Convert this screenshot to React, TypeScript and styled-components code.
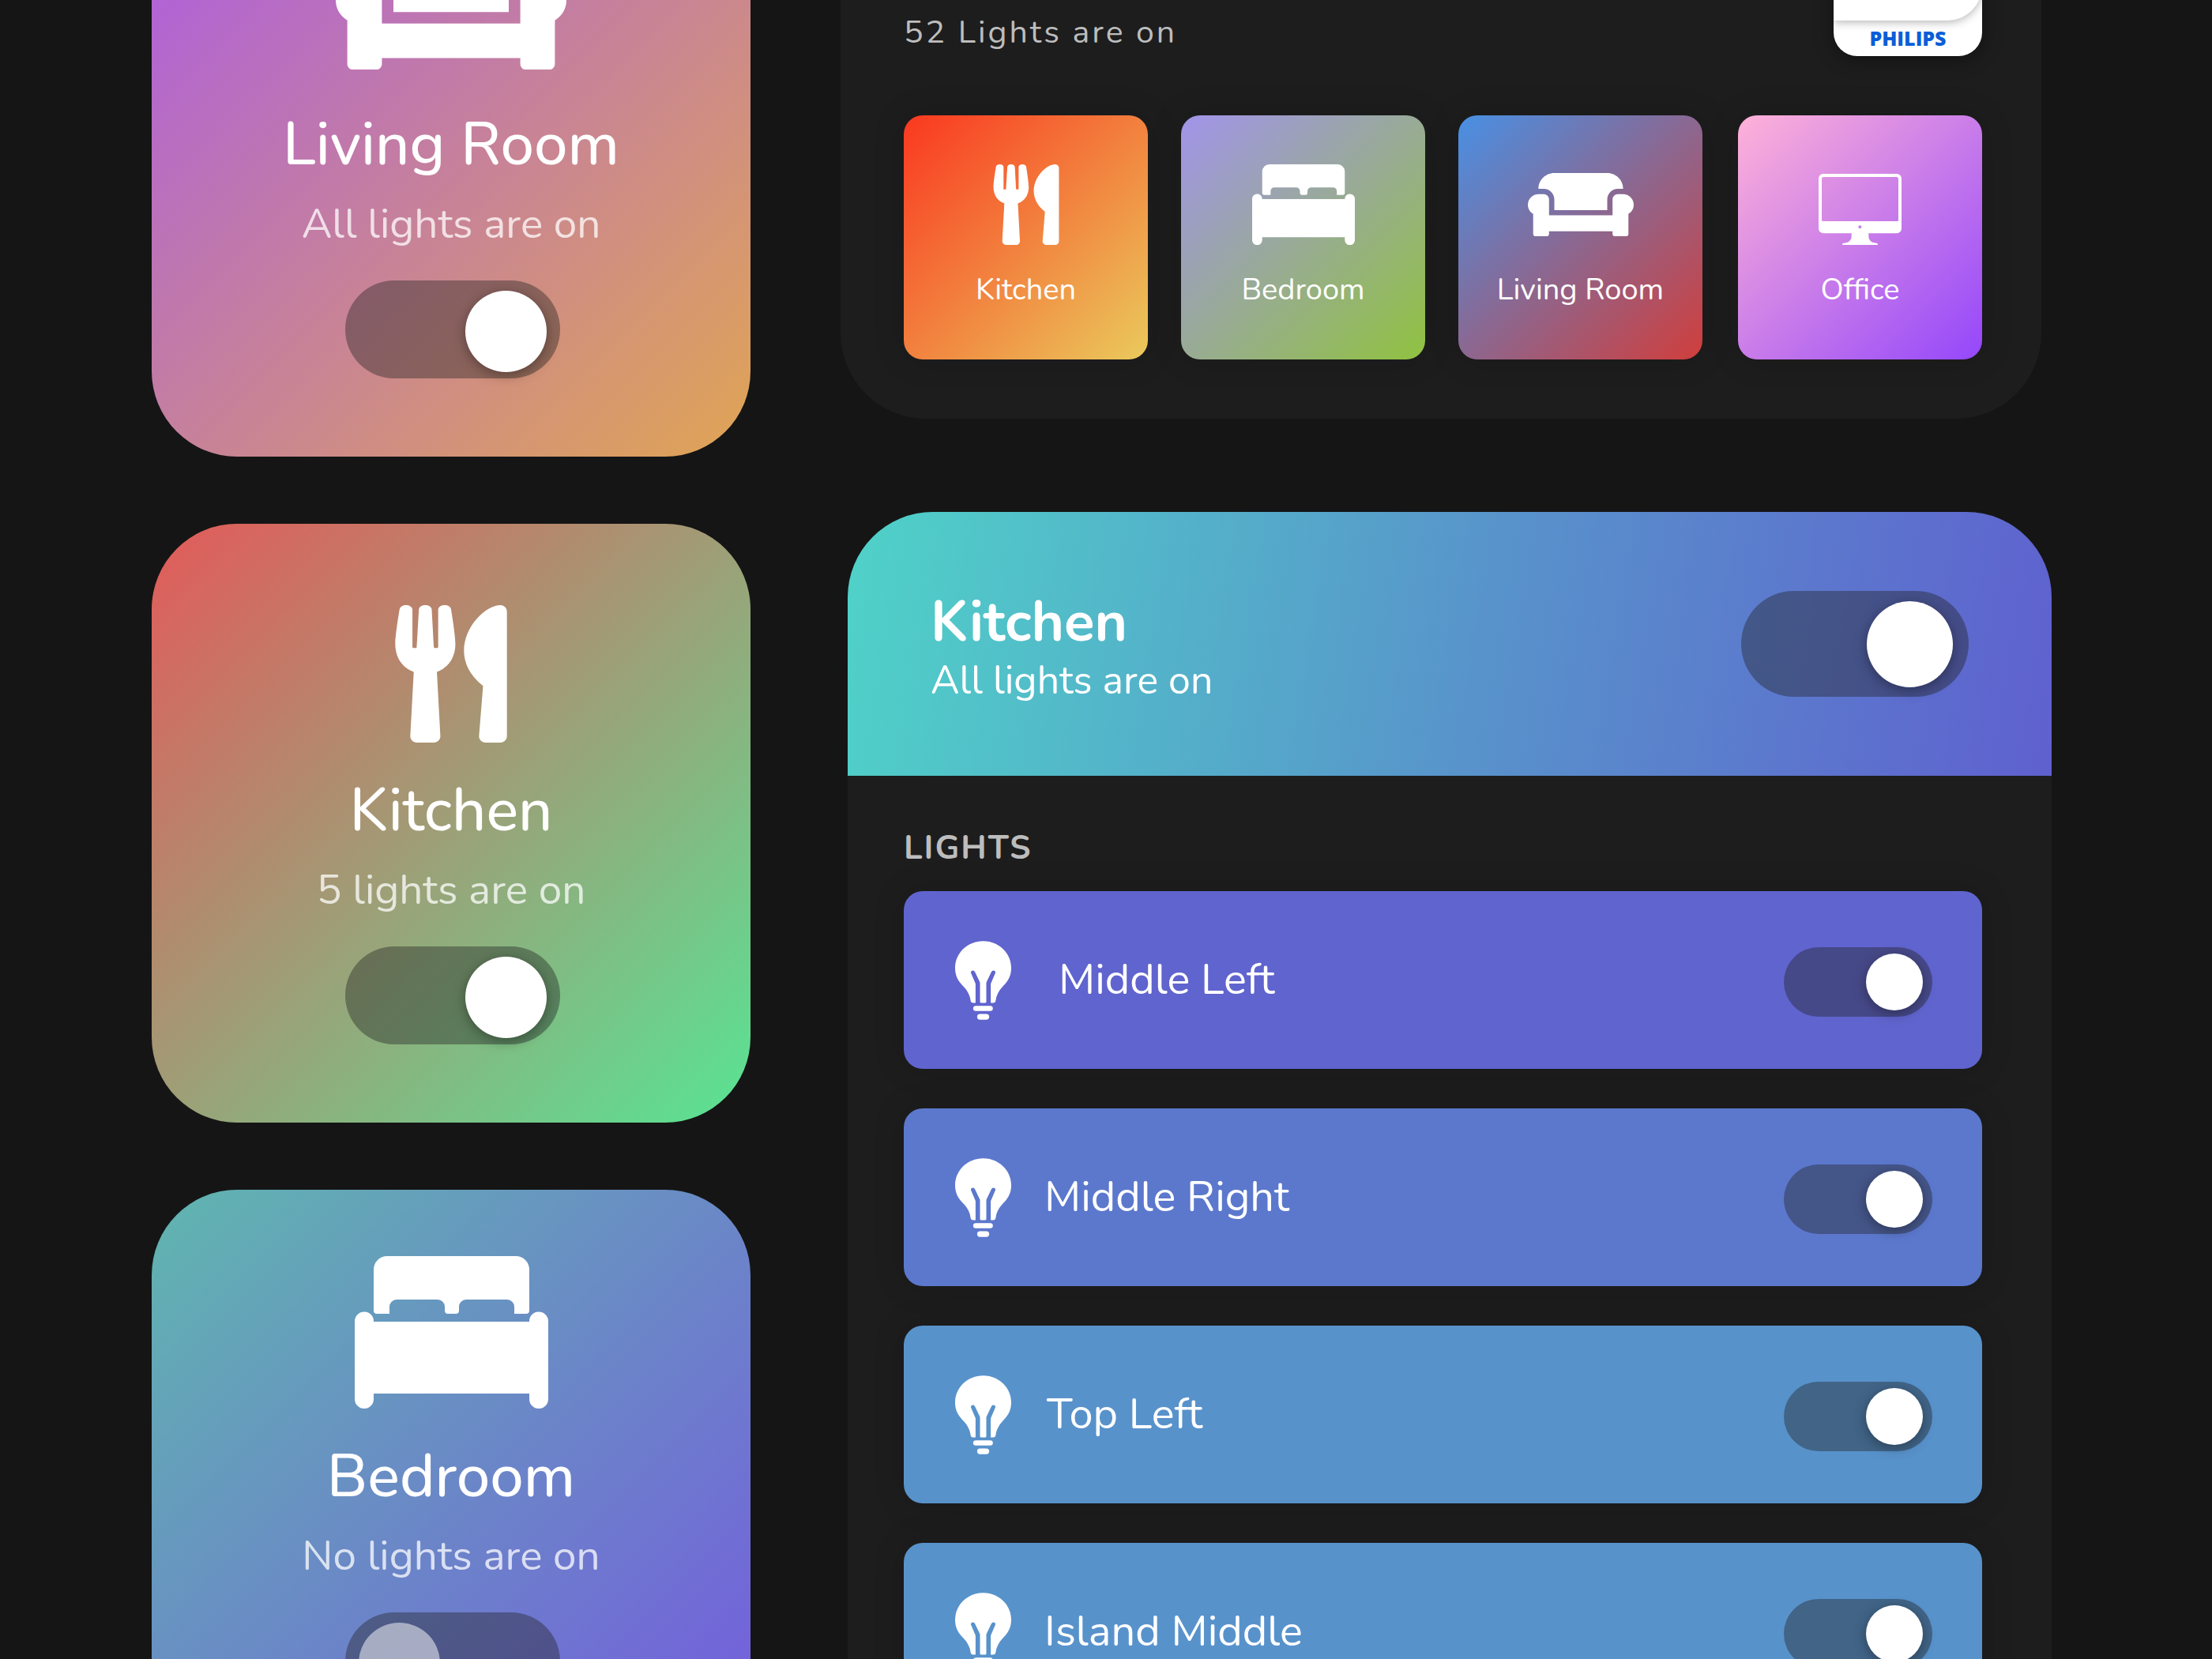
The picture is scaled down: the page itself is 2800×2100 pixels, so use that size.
import React from "react";
import styled, { createGlobalStyle } from "styled-components";
import { FaUtensils } from "react-icons/fa";

const GlobalStyle = createGlobalStyle`
  *, *::before, *::after { box-sizing: border-box; }
  body {
    margin: 0;
    background: #151515;
    color: #fff;
    font-family: Nunito, "Open Sans", "Noto Sans", sans-serif;
  }
  h1, h2, h3, p, ul { margin: 0; padding: 0; font-weight: 400; }
`;

const Viewport = styled.div`
  height: 100vh;
  overflow: hidden;
  display: flex;
  flex-direction: column;
`;

/* The board is scrolled: its first row starts above the top edge. */
const Board = styled.main`
  display: grid;
  grid-template-columns: 758fr 1533fr;
  align-items: start;
  gap: 114px;
  margin-top: -180px;
  padding: 0 203px 0 192px;
`;

const RoomColumn = styled.div`
  display: flex;
  flex-direction: column;
  gap: 85px;
`;

const RoomCard = styled.section<{ $from: string; $to: string }>`
  aspect-ratio: 1;
  display: flex;
  flex-direction: column;
  align-items: center;
  padding-top: 84px;
  border-radius: 108px;
  background: linear-gradient(135deg, ${(p) => p.$from}, ${(p) => p.$to});
`;

const IconBox = styled.div<{ $height: number; $align: string }>`
  height: ${(p) => p.$height}px;
  display: flex;
  align-items: ${(p) => p.$align};
  justify-content: center;
`;

const RoomName = styled.h2`
  margin-top: 38px;
  font-size: 76px;
  line-height: 96px;
  font-weight: 500;
`;

const RoomStatus = styled.p`
  margin: 17px 0 35px;
  font-size: 53px;
  line-height: 72px;
  color: rgba(255, 255, 255, 0.75);
`;

const sizes = {
  small: { w: 188, h: 88, knob: 72, pad: "0 12px", margin: "4px 0 0" },
  medium: { w: 272, h: 124, knob: 103, pad: "4px 17px 0", margin: "0 0 0 4px" },
  large: { w: 288, h: 134, knob: 109, pad: "0 20px", margin: "0" },
};

const Switch = styled.input.attrs({ type: "checkbox", role: "switch" })<{
  $size: keyof typeof sizes;
}>`
  appearance: none;
  flex: none;
  display: flex;
  align-items: center;
  justify-content: flex-start;
  margin: ${(p) => sizes[p.$size].margin};
  width: ${(p) => sizes[p.$size].w}px;
  height: ${(p) => sizes[p.$size].h}px;
  padding: ${(p) => sizes[p.$size].pad};
  border-radius: 67px;
  background: rgba(33, 33, 33, 0.4);
  cursor: pointer;

  &::before {
    content: "";
    width: ${(p) => sizes[p.$size].knob}px;
    height: ${(p) => sizes[p.$size].knob}px;
    border-radius: 50%;
    background: rgba(255, 255, 255, 0.5);
  }
  &:checked {
    justify-content: flex-end;
  }
  &:checked::before {
    background: #fff;
    box-shadow: 0 4px 16px rgba(0, 0, 0, 0.35);
  }
`;

const PanelColumn = styled.div`
  display: flex;
  flex-direction: column;
  gap: 118px;
`;

const HubPanel = styled.section`
  margin-right: 13px;
  padding: 63px 75px 75px 80px;
  border-radius: 108px;
  background: #1d1d1d;
`;

const HubHeader = styled.header`
  display: flex;
  justify-content: space-between;
  align-items: flex-end;
  margin-bottom: 75px;
`;

const HubStatus = styled.p`
  font-size: 41px;
  line-height: 60px;
  letter-spacing: 3px;
  color: #bdbdbd;
`;

const BrandTile = styled.div`
  display: flex;
  flex-direction: column;
  width: 188px;
  height: 188px;
  border-radius: 30px;
  overflow: hidden;
  background: #fff;
  box-shadow: 0 4px 24px rgba(0, 0, 0, 0.4);
`;

const BrandFace = styled.div`
  flex: 1;
  border-bottom-right-radius: 44px;
  background: #fff;
  box-shadow: 0 2px 12px rgba(0, 0, 0, 0.3);
`;

const BrandName = styled.span`
  text-align: center;
  font-family: "Open Sans", sans-serif;
  font-size: 25px;
  font-weight: 800;
  line-height: 45px;
  color: #0b5ed7;
`;

const TileRow = styled.div`
  display: flex;
  gap: 42px;
`;

const Tile = styled.button<{ $from: string; $to: string }>`
  flex: 0 1 309px;
  aspect-ratio: 1;
  display: flex;
  flex-direction: column;
  align-items: center;
  gap: 33px;
  padding: 62px 0 0;
  border: 0;
  border-radius: 24px;
  background: linear-gradient(135deg, ${(p) => p.$from}, ${(p) => p.$to});
  box-shadow: 0 0 40px rgba(0, 0, 0, 0.15);
  color: #fff;
  font: inherit;
  font-size: 38px;
  line-height: 48px;
  cursor: pointer;

  &:last-child {
    margin-left: auto;
  }
`;

const RoomPanel = styled.section`
  margin-left: 9px;
  border-radius: 108px;
  overflow: hidden;
  background: #1d1d1d;
`;

const RoomPanelHeader = styled.header`
  display: flex;
  align-items: center;
  justify-content: space-between;
  min-height: 334px;
  padding: 0 105px;
  background: linear-gradient(100deg, #4fd2c8, #5893cb 53%, #5f60cf);
`;

const PanelHeading = styled.div`
  padding-top: 14px;
`;

const PanelTitle = styled.h2`
  font-size: 71px;
  line-height: 80px;
  font-weight: 700;
`;

const PanelStatus = styled.p`
  font-size: 50px;
  line-height: 68px;
`;

const LightsSection = styled.div`
  padding: 64px 88px 80px 71px;
`;

const SectionLabel = styled.h3`
  font-size: 42px;
  line-height: 56px;
  font-weight: 700;
  letter-spacing: 2px;
  color: #bdbdbd;
`;

const LightList = styled.ul`
  display: flex;
  flex-direction: column;
  gap: 50px;
  margin-top: 26px;
  list-style: none;
`;

const LightRow = styled.li<{ $color: string }>`
  display: flex;
  align-items: center;
  min-height: 225px;
  padding: 0 63px 0 65px;
  border-radius: 24px;
  background: ${(p) => p.$color};
  box-shadow: 0 0 40px rgba(0, 0, 0, 0.15);
`;

const LightName = styled.label<{ $indent: number }>`
  flex: 1;
  margin-left: ${(p) => p.$indent}px;
  padding-bottom: 2px;
  font-size: 54px;
  line-height: 72px;
`;

function Couch({ width }: { width: number }) {
  return (
    <svg width={width} viewBox="0 64 640 384" fill="#fff" aria-hidden="true">
      <path d="M160 224v64h320v-64c0-35.3 28.7-64 64-64h32c0-53-43-96-96-96H160c-53 0-96 43-96 96h32c35.3 0 64 28.7 64 64zm416-32h-32c-17.7 0-32 14.3-32 32v96H128v-96c0-17.7-14.3-32-32-32H64c-35.3 0-64 28.7-64 64 0 23.6 13 44 32 55.1V432c0 8.8 7.2 16 16 16h64c8.8 0 16-7.2 16-16v-16h384v16c0 8.8 7.2 16 16 16h64c8.8 0 16-7.2 16-16V311.1c19-11.1 32-31.5 32-55.1 0-35.3-28.7-64-64-64z" />
    </svg>
  );
}

function Bed({ width }: { width: number }) {
  return (
    <svg width={width} viewBox="0 0 245 193" fill="#fff" aria-hidden="true">
      <path d="M24 69V17a17 17 0 0 1 17-17H204a17 17 0 0 1 17 17V69a4 4 0 0 1-4 4H202V64a9 9 0 0 0-9-9H141a9 9 0 0 0-9 9V69a4 4 0 0 1-4 4H118a4 4 0 0 1-4-4V64a9 9 0 0 0-9-9H53a9 9 0 0 0-9 9V73H28a4 4 0 0 1-4-4Z" />
      <path d="M0 82a12 12 0 0 1 24 1H221a12 12 0 0 1 24-1V181a12 12 0 0 1-24 0V174H24v7a12 12 0 0 1-24 0Z" />
    </svg>
  );
}

function Desktop({ width }: { width: number }) {
  return (
    <svg width={width} viewBox="0 0 315 271" fill="#fff" aria-hidden="true">
      <path
        fillRule="evenodd"
        d="M18 0H297a18 18 0 0 1 18 18V208a18 18 0 0 1-18 18H190V236C190 250 198 260 212 262L222 264Q225 265 225 268V271H90V268Q90 265 93 264L103 262C117 260 125 250 125 236V226H18A18 18 0 0 1 0 208V18A18 18 0 0 1 18 0ZM20 12a8 8 0 0 0-8 8V176a4 4 0 0 0 4 4H299a4 4 0 0 0 4-4V20a8 8 0 0 0-8-8ZM157 196a6 6 0 1 0 .1 0Z"
      />
    </svg>
  );
}

function Bulb() {
  return (
    <svg width={71} height={100} viewBox="0 0 214 300" fill="#fff" aria-hidden="true">
      <path d="M107 0C48 0 0 45 0 103C0 134 13 154 33 174C48 190 57 208 59 226Q60 236 69 236H78V163L61 123Q58 115 65 113Q72 111 76 118L94 156Q95 158 95 161V232Q95 236 100 236H114Q119 236 119 232V161Q119 158 120 156L138 118Q142 111 149 113Q156 115 153 123L136 163V236H145Q154 236 155 226C157 208 166 190 181 174C201 154 214 134 214 103C214 45 166 0 107 0Z" />
      <rect x="69" y="247" width="75" height="20" rx="10" />
      <rect x="84" y="278" width="46" height="22" rx="11" />
    </svg>
  );
}

function Utensils({ height }: { height: number }) {
  return <FaUtensils style={{ height, width: "auto" }} aria-hidden="true" />;
}

const rooms = [
  { name: "Living Room", status: "All lights are on", on: true, from: "#ab5be6", to: "#e0a554", icon: <Couch width={292} />, align: "center" },
  { name: "Kitchen", status: "5 lights are on", on: true, from: "#e35a5a", to: "#58e494", icon: <Utensils height={174} />, align: "flex-end" },
  { name: "Bedroom", status: "No lights are on", on: false, from: "#60b6af", to: "#7559df", icon: <Bed width={245} />, align: "center" },
];

const tiles = [
  { name: "Kitchen", from: "#fa3820", to: "#eaca5c", icon: <Utensils height={102} />, align: "center" },
  { name: "Bedroom", from: "#a194ea", to: "#90c240", icon: <Bed width={130} />, align: "center" },
  { name: "Living Room", from: "#4890e4", to: "#d03e3c", icon: <Couch width={134} />, align: "center" },
  { name: "Office", from: "#ffb2d8", to: "#9447fa", icon: <Desktop width={105} />, align: "flex-end" },
];

const lights = [
  { name: "Middle Left", color: "#6064ce", indent: 60 },
  { name: "Middle Right", color: "#5c78cd", indent: 42 },
  { name: "Top Left", color: "#5892cb", indent: 45 },
  { name: "Island Middle", color: "#5892cb", indent: 42 },
];

export default function App() {
  return (
    <Viewport>
      <GlobalStyle />
      <Board>
        <RoomColumn>
          {rooms.map((room) => (
            <RoomCard key={room.name} $from={room.from} $to={room.to}>
              <IconBox $height={193} $align={room.align}>{room.icon}</IconBox>
              <RoomName>{room.name}</RoomName>
              <RoomStatus>{room.status}</RoomStatus>
              <Switch $size="medium" defaultChecked={room.on} aria-label={room.name} />
            </RoomCard>
          ))}
        </RoomColumn>
        <PanelColumn>
          <HubPanel>
            <HubHeader>
              <HubStatus>52 Lights are on</HubStatus>
              <BrandTile>
                <BrandFace />
                <BrandName>PHILIPS</BrandName>
              </BrandTile>
            </HubHeader>
            <TileRow>
              {tiles.map((tile) => (
                <Tile key={tile.name} type="button" $from={tile.from} $to={tile.to}>
                  <IconBox $height={102} $align={tile.align}>{tile.icon}</IconBox>
                  {tile.name}
                </Tile>
              ))}
            </TileRow>
          </HubPanel>
          <RoomPanel>
            <RoomPanelHeader>
              <PanelHeading>
                <PanelTitle>Kitchen</PanelTitle>
                <PanelStatus>All lights are on</PanelStatus>
              </PanelHeading>
              <Switch $size="large" defaultChecked aria-label="All kitchen lights" />
            </RoomPanelHeader>
            <LightsSection>
              <SectionLabel>LIGHTS</SectionLabel>
              <LightList>
                {lights.map((light, i) => (
                  <LightRow key={light.name} $color={light.color}>
                    <Bulb />
                    <LightName htmlFor={`light-${i}`} $indent={light.indent}>{light.name}</LightName>
                    <Switch id={`light-${i}`} $size="small" defaultChecked />
                  </LightRow>
                ))}
              </LightList>
            </LightsSection>
          </RoomPanel>
        </PanelColumn>
      </Board>
    </Viewport>
  );
}
